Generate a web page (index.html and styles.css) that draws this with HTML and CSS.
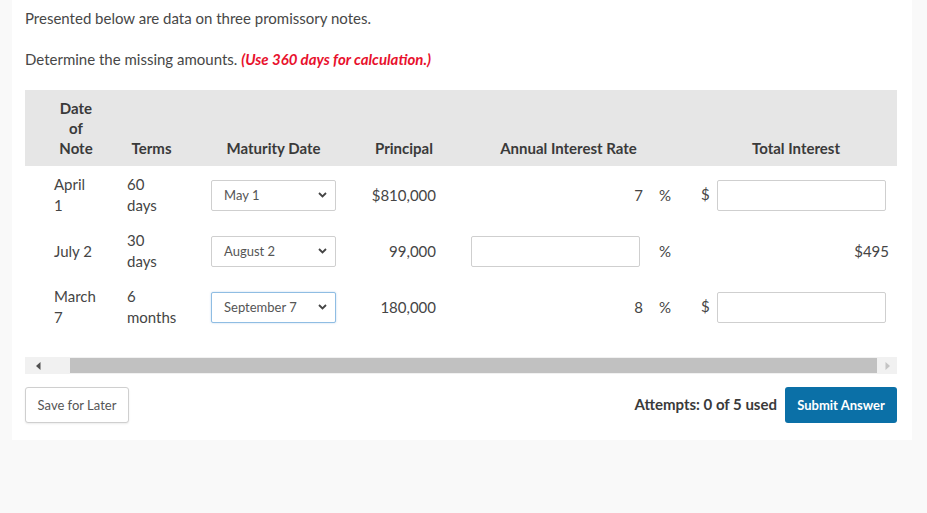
FILE: index.html
```html
<!DOCTYPE html>
<html>
<head>
<meta charset="utf-8">
<link rel="stylesheet" href="styles.css">
</head>
<body>
<div class="card">
  <p class="intro">Presented below are data on three promissory notes.</p>
  <p class="intro second">Determine the missing amounts. <em class="note">(Use 360 days for calculation.)</em></p>
  <table class="notes">
    <colgroup>
      <col class="w1"><col class="w2"><col class="w3"><col class="w4"><col class="w5"><col class="w6"><col class="w7">
    </colgroup>
    <thead>
      <tr>
        <th class="c1">Date<br>of<br>Note</th>
        <th class="c2">Terms</th>
        <th class="c3">Maturity Date</th>
        <th class="c4">Principal</th>
        <th class="c5h" colspan="2">Annual Interest Rate</th>
        <th class="c7h">Total Interest</th>
      </tr>
    </thead>
    <tbody>
      <tr>
        <td class="c1">April<br>1</td>
        <td class="c2">60<br>days</td>
        <td class="c3"><div class="select"><span>May 1</span><svg class="chev" width="9" height="6" viewBox="0 0 9 6"><path d="M1 1 L4.5 4.5 L8 1" fill="none" stroke="#444" stroke-width="1.8"/></svg></div></td>
        <td class="c4">$810,000</td>
        <td class="c5">7</td>
        <td class="c6">%</td>
        <td class="c7"><div class="money"><span class="dollar">$</span><div class="field"></div></div></td>
      </tr>
      <tr>
        <td class="c1">July 2</td>
        <td class="c2">30<br>days</td>
        <td class="c3"><div class="select"><span>August 2</span><svg class="chev" width="9" height="6" viewBox="0 0 9 6"><path d="M1 1 L4.5 4.5 L8 1" fill="none" stroke="#444" stroke-width="1.8"/></svg></div></td>
        <td class="c4">99,000</td>
        <td class="c5"><div class="field rate"></div></td>
        <td class="c6">%</td>
        <td class="c7 total">$495</td>
      </tr>
      <tr>
        <td class="c1">March<br>7</td>
        <td class="c2">6<br>months</td>
        <td class="c3"><div class="select focus"><span>September 7</span><svg class="chev" width="9" height="6" viewBox="0 0 9 6"><path d="M1 1 L4.5 4.5 L8 1" fill="none" stroke="#444" stroke-width="1.8"/></svg></div></td>
        <td class="c4">180,000</td>
        <td class="c5">8</td>
        <td class="c6">%</td>
        <td class="c7"><div class="money"><span class="dollar">$</span><div class="field"></div></div></td>
      </tr>
    </tbody>
  </table>
  <div class="scrollbar">
    <div class="sb-left"><svg width="5" height="8" viewBox="0 0 5 8"><path d="M4.5 0 L0 4 L4.5 8 Z" fill="#505050"/></svg></div>
    <div class="sb-thumb"></div>
    <div class="sb-right"><svg width="5" height="8" viewBox="0 0 5 8"><path d="M0.5 0 L5 4 L0.5 8 Z" fill="#c4c4c4"/></svg></div>
  </div>
  <div class="actions">
    <button class="btn save">Save for Later</button>
    <div class="right">
      <span class="attempts">Attempts: 0 of 5 used</span>
      <button class="btn submit">Submit Answer</button>
    </div>
  </div>
</div>
</body>
</html>
```
FILE: styles.css
```css
html, body {
  margin: 0;
  padding: 0;
  background: #f9f9f9;
}
body {
  font-family: Lato, "Open Sans", Arial, sans-serif;
  color: #454545;
}
.card {
  margin-left: 12px;
  width: 872px;
  height: 432px;
  padding: 8px 15px 0 13px;
  background: #ffffff;
}
.intro {
  margin: 0;
  font-size: 15px;
  line-height: 20px;
  color: #474747;
}
.intro.second {
  margin-top: 21px;
}
.note {
  color: #e8112d;
  font-weight: 700;
  font-style: italic;
}
.notes {
  margin-top: 21px;
  width: 872px;
  border-collapse: collapse;
  table-layout: fixed;
  font-size: 15px;
}
.w1 { width: 87px; }
.w2 { width: 78px; }
.w3 { width: 162px; }
.w4 { width: 100px; }
.w5 { width: 198px; }
.w6 { width: 35px; }
.w7 { width: 212px; }
.notes thead tr {
  background: #e6e6e6;
}
.notes th {
  font-weight: 700;
  color: #3a3a3a;
  line-height: 20px;
  padding: 8px 0 8px 0;
  vertical-align: bottom;
  text-align: center;
}
.notes td {
  padding: 8px 0 6px 0;
  line-height: 21px;
  vertical-align: middle;
  color: #454545;
}
th.c1 { padding-left: 29px; padding-right: 14px; }
td.c1 { padding-left: 29px; padding-right: 10px; }
th.c2 { padding-left: 15px; padding-right: 14px; }
td.c2 { padding-left: 15px; padding-right: 4px; }
.c3 { padding-left: 21px !important; padding-right: 16px !important; }
th.c4 { padding-left: 20px; padding-right: 16px; }
td.c4 { padding-right: 16px; text-align: right; }
td.c5 { padding-left: 19px; padding-right: 7px; text-align: right; }
td.c6 { padding-left: 9px; }
th.c7h { padding-left: 10px; }
td.c7 { padding-left: 16px; padding-right: 11px; }
td.total { text-align: right; padding-right: 8px; }
.select {
  box-sizing: border-box;
  width: 125px;
  height: 31px;
  border: 1px solid #cfcfcf;
  border-radius: 2px;
  display: flex;
  align-items: center;
  justify-content: space-between;
  padding: 0 8px 0 12px;
  font-size: 13px;
  color: #555;
  background: #fff;
}
.select.focus {
  border-color: #8fbde3;
  box-shadow: 0 0 2px rgba(120, 170, 220, 0.5);
}
.chev { display: block; }
.field {
  box-sizing: border-box;
  width: 169px;
  height: 31px;
  border: 1px solid #cfcfcf;
  border-radius: 2px;
  background: #fff;
}
.money {
  display: flex;
  align-items: center;
}
.dollar {
  width: 8px;
  margin-right: 8px;
  position: relative;
  top: -1px;
}
.scrollbar {
  margin-top: 23px;
  height: 17px;
  display: flex;
  background: #f1f1f1;
}
.sb-left {
  width: 45px;
  display: flex;
  align-items: center;
  padding-left: 11px;
  box-sizing: border-box;
}
.sb-thumb {
  flex: 1;
  margin: 1px 0;
  background: #c1c1c1;
}
.sb-right {
  width: 20px;
  display: flex;
  align-items: center;
  justify-content: center;
}
.actions {
  margin-top: 13px;
  display: flex;
  justify-content: space-between;
  align-items: center;
}
.right {
  display: flex;
  align-items: center;
  gap: 8px;
}
.btn {
  font-family: Lato, "Open Sans", Arial, sans-serif;
  font-size: 13px;
  height: 36px;
  border-radius: 3px;
  cursor: pointer;
}
.save {
  width: 104px;
  background: #fff;
  border: 1px solid #cfcfcf;
  color: #555;
  box-shadow: 0 1px 2px rgba(0,0,0,0.08);
}
.submit {
  width: 112px;
  background: #0b70a7;
  border: none;
  color: #fff;
  font-weight: 700;
}
.attempts {
  font-size: 15px;
  font-weight: 700;
  color: #3a3a3a;
  position: relative;
  top: -1px;
}
```
